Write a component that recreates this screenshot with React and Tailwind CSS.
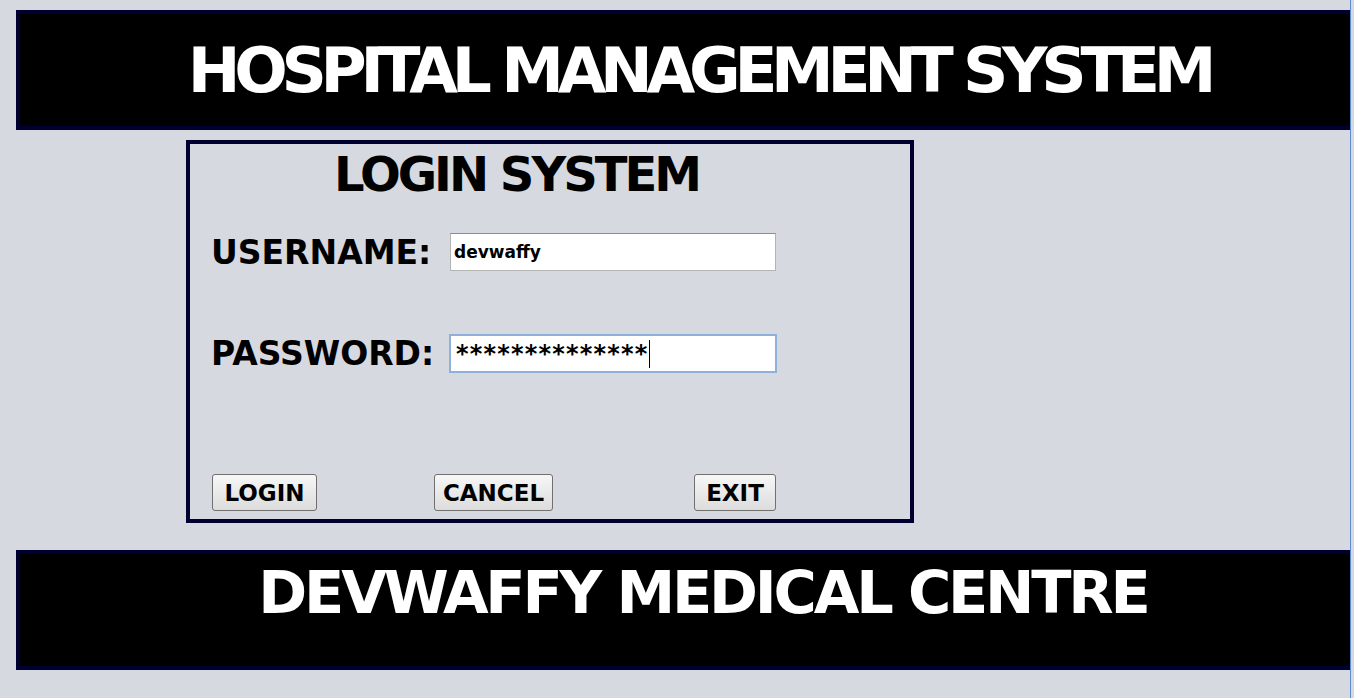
import React from 'react';

const font = "font-['DejaVu_Sans','Verdana',sans-serif] font-bold";

function Banner({ children, className }) {
  return (
    <div
      className={`ml-[16px] h-[120px] border-4 border-r-0 border-[#000030] bg-black flex justify-center ${className}`}
    >
      {children}
    </div>
  );
}

function Field({ label, children, className }) {
  return (
    <div className={`ml-[21px] flex items-center ${className}`}>
      <div className="w-[239px] shrink-0 text-[33px] leading-none text-black">{label}</div>
      {children}
    </div>
  );
}

function Button({ children, className }) {
  return (
    <button
      className={`h-[37px] pt-[2px] rounded-[3px] border border-[#707070] bg-gradient-to-b from-[#f7f7f7] to-[#dcdcdc] text-[23px] leading-none text-black ${className}`}
    >
      {children}
    </button>
  );
}

export default function App() {
  return (
    <div className={`w-[1354px] h-[698px] bg-[#d6d9e0] flex overflow-hidden ${font}`}>
      <div className="w-[1350px] flex flex-col">
        {/* header */}
        <Banner className="mt-[10px] items-center pl-[28px]">
          <h1 className="text-[63px] leading-none text-white tracking-[-6.3px]">
            HOSPITAL MANAGEMENT SYSTEM
          </h1>
        </Banner>

        {/* login panel */}
        <div className="mt-[10px] ml-[186px] w-[728px] h-[383px] border-4 border-[#000030] flex flex-col">
          <h2 className="mt-[6px] ml-[144px] text-[48px] leading-none text-black tracking-[-3px]">
            LOGIN SYSTEM
          </h2>

          <Field label="USERNAME:" className="mt-[35px] h-[38px]">
            <div className="w-[326px] h-[38px] pt-[2px] bg-white border border-[#b4b4b4] border-t-[#8c8c8c] flex items-center pl-[3px] text-[17px] text-black">
              devwaffy
            </div>
          </Field>

          <Field label="PASSWORD:" className="mt-[63px] h-[39px]">
            <div className="-ml-px w-[328px] h-[39px] bg-white border-2 border-[#8eb0da] flex items-center pl-[5px] text-[24px] leading-none text-black">
              <span className="tracking-[1.2px]">**************</span>
              <span className="w-px h-[28px] bg-black" />
            </div>
          </Field>

          <div className="mt-[101px] ml-[22px] flex">
            <Button className="w-[105px]">LOGIN</Button>
            <Button className="ml-[117px] w-[119px]">CANCEL</Button>
            <Button className="ml-[141px] w-[82px]">EXIT</Button>
          </div>
        </div>

        {/* footer */}
        <Banner className="mt-[27px] items-start pt-[9px] pl-[36px]">
          <h1 className="text-[59px] leading-none text-white tracking-[-3.2px]">
            DEVWAFFY MEDICAL CENTRE
          </h1>
        </Banner>
      </div>
      <div className="w-px h-full bg-[#5b8bd0]" />
    </div>
  );
}
